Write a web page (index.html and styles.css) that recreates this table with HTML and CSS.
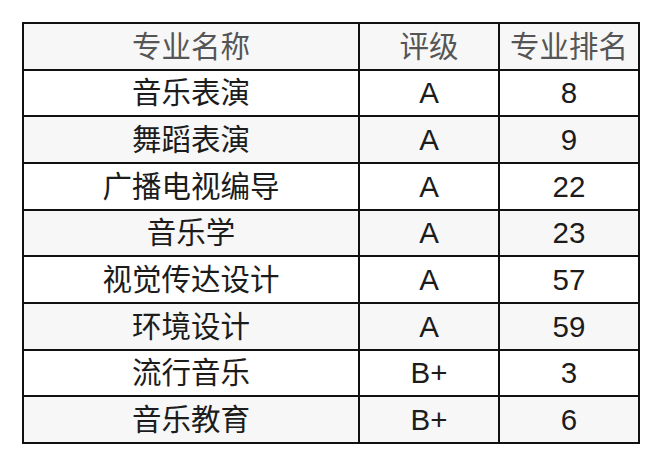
FILE: index.html
```html
<!DOCTYPE html>
<html lang="zh">
<head>
<meta charset="utf-8">
<link rel="stylesheet" href="styles.css">
</head>
<body>
<table class="rank-table">
  <colgroup>
    <col class="c-name">
    <col class="c-grade">
    <col class="c-rank">
  </colgroup>
  <thead>
    <tr><th>专业名称</th><th>评级</th><th>专业排名</th></tr>
  </thead>
  <tbody>
    <tr><td>音乐表演</td><td>A</td><td>8</td></tr>
    <tr><td>舞蹈表演</td><td>A</td><td>9</td></tr>
    <tr><td>广播电视编导</td><td>A</td><td>22</td></tr>
    <tr><td>音乐学</td><td>A</td><td>23</td></tr>
    <tr><td>视觉传达设计</td><td>A</td><td>57</td></tr>
    <tr><td>环境设计</td><td>A</td><td>59</td></tr>
    <tr><td>流行音乐</td><td>B+</td><td>3</td></tr>
    <tr><td>音乐教育</td><td>B+</td><td>6</td></tr>
  </tbody>
</table>
</body>
</html>
```

FILE: styles.css
```css
html, body {
  margin: 0;
  padding: 0;
  background: #ffffff;
}
body {
  padding: 22px;
  font-family: "Liberation Sans", "Noto Sans CJK SC", sans-serif;
}
.rank-table {
  border-collapse: collapse;
  width: 616px;
  table-layout: fixed;
  border: 2px solid #111111;
}
.c-name { width: 336px; }
.c-grade { width: 140px; }
.c-rank { width: 140px; }
.rank-table th,
.rank-table td {
  border: 2px solid #111111;
  height: 44.67px;
  padding: 0;
  text-align: center;
  vertical-align: middle;
  font-size: 29.5px;
  line-height: 1;
  font-weight: normal;
}
.rank-table th {
  color: #555555;
  background: #f7f7f7;
}
.rank-table td {
  color: #1c1c1c;
}
.rank-table tbody tr:nth-child(even) td {
  background: #f7f7f7;
}
```
